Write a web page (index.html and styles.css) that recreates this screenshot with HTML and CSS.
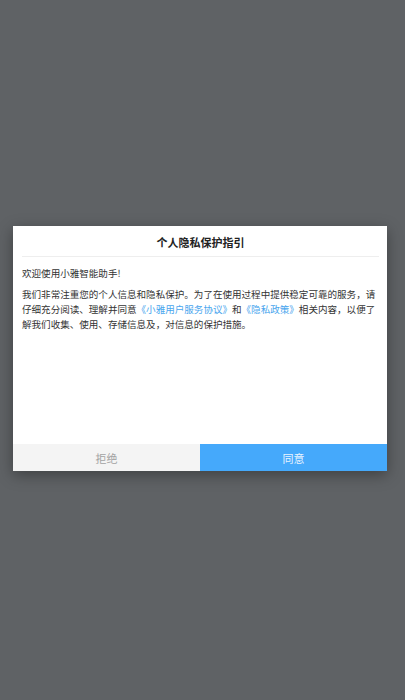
FILE: index.html
```html
<!DOCTYPE html>
<html lang="zh-CN">
<head>
<meta charset="utf-8">
<title>个人隐私保护指引</title>
<link rel="stylesheet" href="styles.css">
</head>
<body>
<div class="overlay">
  <div class="dialog">
    <div class="dialog-header">个人隐私保护指引</div>
    <div class="dialog-body">
      <p class="greeting">欢迎使用小雅智能助手!</p>
      <p class="content">我们非常注重您的个人信息和隐私保护。为了在使用过程中提供稳定可靠的服务，请仔细充分阅读、理解并同意<span class="link">《小雅用户服务协议》</span>和<span class="link">《隐私政策》</span>相关内容，以便了解我们收集、使用、存储信息及，对信息的保护措施。</p>
    </div>
    <div class="dialog-footer">
      <div class="btn btn-refuse">拒绝</div>
      <div class="btn btn-agree">同意</div>
    </div>
  </div>
</div>
</body>
</html>
```
FILE: styles.css
```css
html, body {
  margin: 0;
  padding: 0;
}
body {
  background: #5f6265;
  font-family: "Noto Sans CJK SC", "Noto Sans", sans-serif;
  color: #333;
}
.overlay {
  height: 700px;
  box-sizing: border-box;
  padding: 226px 18px 0 13px;
}
.dialog {
  width: 374px;
  height: 245px;
  background: #fff;
  display: flex;
  flex-direction: column;
  box-shadow: 0 4px 14px rgba(0, 0, 0, 0.35);
}
.dialog-header {
  margin: 0 8px 0 9px;
  height: 31px;
  border-bottom: 1px solid #eeeeee;
  display: flex;
  align-items: center;
  justify-content: center;
  font-size: 11px;
  font-weight: bold;
  color: #222;
  padding-top: 1px;
  box-sizing: border-box;
}
.dialog-body {
  flex: 1;
  padding: 9px 9px 0 9px;
  font-size: 9.55px;
  line-height: 15px;
  color: #333;
}
.greeting {
  margin: 0 0 6px 0;
}
.content {
  margin: 0;
}
.link {
  color: #4aa6ee;
}
.dialog-footer {
  display: flex;
  height: 27px;
}
.btn {
  flex: 1;
  display: flex;
  align-items: center;
  justify-content: center;
  font-size: 11px;
}
.btn-refuse {
  background: #f4f4f4;
  color: #a3a3a3;
}
.btn-agree {
  background: #45a9fb;
  color: #e8f4ff;
}
```
